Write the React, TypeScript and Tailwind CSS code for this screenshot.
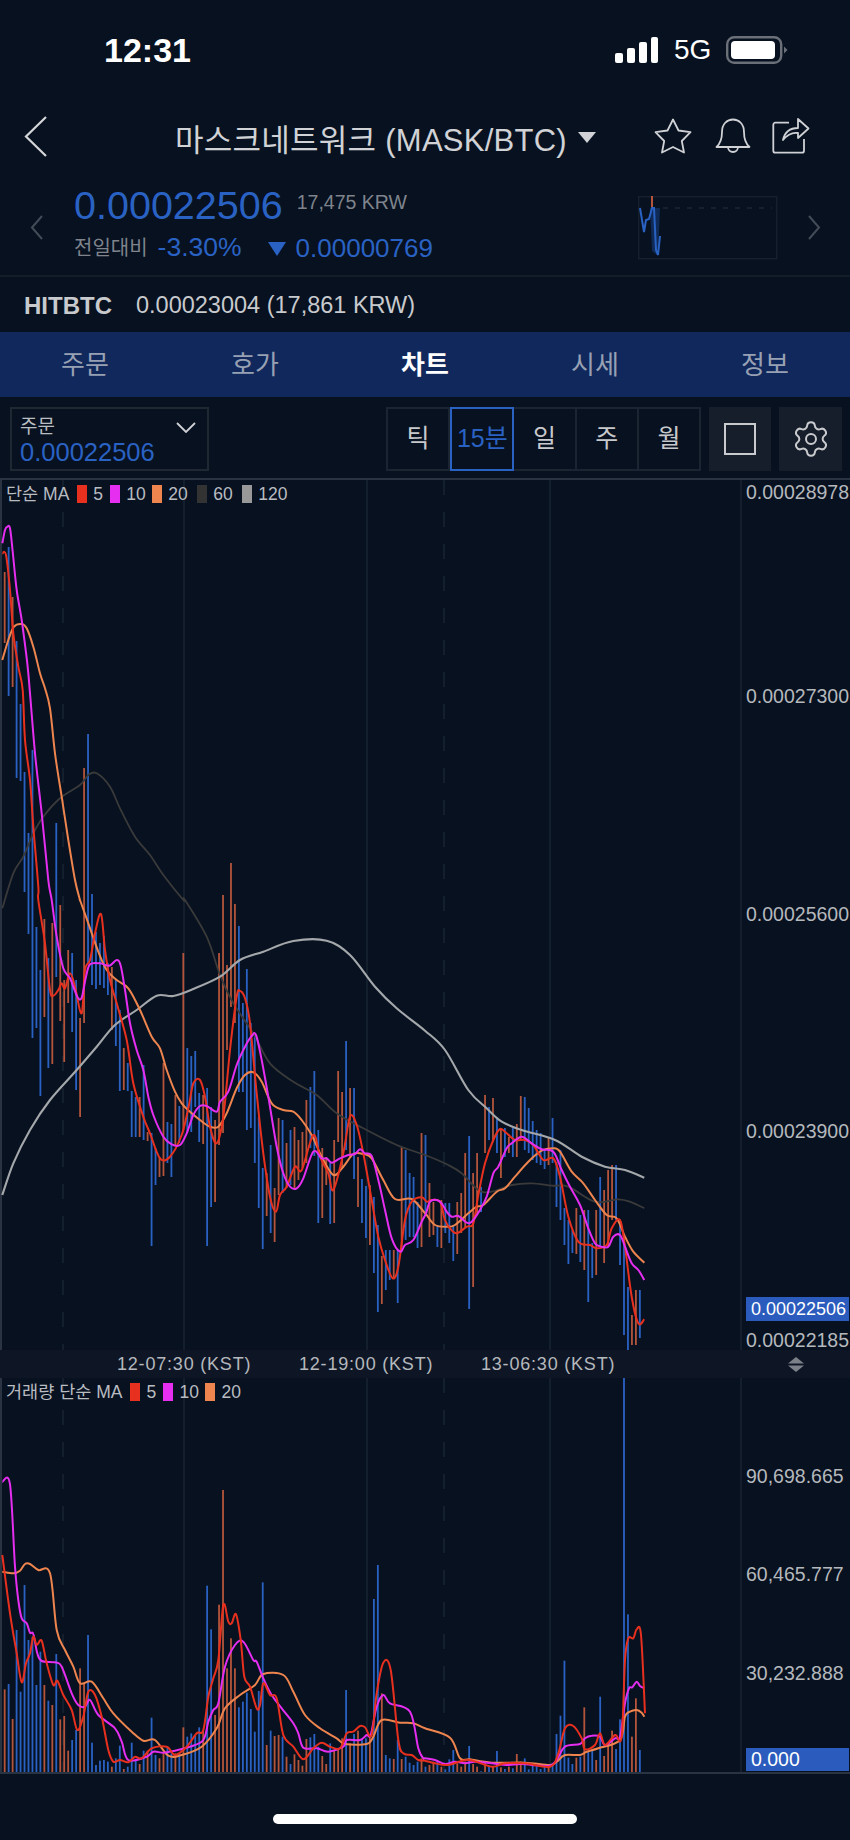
import { Settings } from 'lucide-react'

// candle rows: colour, high, low (page y)
const candles: [string, number, number][] = [
  ['o',572,643],['b',547,696],['o',597,687],['b',641,778],['b',704,781],['b',772,892],['b',833,934],['b',750,1038],['b',927,1028],['b',970,1096],
  ['o',919,1017],['b',958,1068],['o',923,1064],['b',823,977],['o',905,1021],['o',980,1062],['o',950,1003],['b',953,1032],['b',980,1090],['o',1018,1117],
  ['o',768,1023],['b',734,963],['b',894,985],['b',932,989],['b',943,985],['b',936,988],['b',963,995],['o',967,1030],['b',980,1046],['b',1010,1091],
  ['o',1048,1090],['b',1063,1091],['b',1091,1137],['b',1097,1137],['o',1097,1137],['b',1065,1140],['o',1132,1141],['b',1133,1246],['b',1148,1185],['o',1157,1177],
  ['o',1063,1176],['b',1122,1163],['b',1124,1177],['o',1095,1145],['b',1106,1143],['o',953,1130],['b',1048,1133],['b',1056,1132],['b',1051,1107],['b',1093,1142],
  ['o',1095,1144],['b',1088,1246],['b',1107,1207],['o',1120,1202],['o',953,1145],['o',895,1133],['o',965,1050],['o',863,1007],['o',904,1023],['b',926,1092],
  ['b',1003,1092],['b',969,1130],['b',1023,1128],['b',1033,1163],['b',1117,1208],['b',1168,1249],['o',1173,1216],['b',1145,1233],['o',1188,1242],['o',1118,1195],
  ['b',1120,1193],['o',1143,1188],['b',1130,1185],['o',1127,1188],['o',1140,1180],['o',1132,1168],['o',1100,1163],['b',1087,1148],['b',1071,1156],['b',1130,1223],
  ['o',1148,1218],['o',1157,1185],['b',1163,1224],['o',1140,1223],['o',1071,1142],['o',1092,1167],['b',1041,1150],['o',1088,1157],['b',1088,1179],['o',1157,1207],
  ['b',1179,1223],['b',1186,1238],['o',1185,1245],['b',1197,1273],['b',1225,1312],['o',1256,1304],['b',1250,1290],['b',1250,1280],['o',1250,1278],['b',1250,1303],
  ['o',1147,1247],['b',1150,1240],['b',1173,1237],['b',1177,1237],['b',1202,1248],['o',1133,1247],['b',1135,1213],['o',1183,1237],['o',1202,1235],['b',1225,1247],
  ['o',1200,1248],['b',1203,1233],['b',1203,1243],['b',1225,1261],['o',1202,1254],['o',1193,1233],['o',1153,1228],['b',1136,1309],['o',1173,1287],['o',1153,1215],
  ['b',1187,1212],['o',1095,1153],['b',1107,1140],['o',1098,1142],['b',1117,1153],['o',1128,1178],['b',1128,1157],['o',1137,1153],['b',1128,1157],['o',1124,1157],
  ['o',1096,1140],['b',1097,1150],['b',1108,1153],['b',1121,1160],['b',1130,1163],['b',1133,1165],['b',1150,1169],['o',1137,1165],['b',1118,1163],['b',1162,1207],
  ['b',1150,1220],['b',1208,1245],['b',1220,1264],['b',1230,1253],['o',1208,1254],['b',1215,1262],['o',1210,1270],['b',1210,1302],['b',1243,1278],['o',1210,1275],
  ['b',1177,1247],['o',1190,1263],['o',1170,1247],['o',1165,1220],['b',1165,1220],['b',1220,1265],['b',1235,1335],['b',1287,1350],['o',1315,1345],['o',1290,1345],
  ['b',1290,1338],
]

// volume tops, measured at 3x from y=1370
const volumes = [
  958,942,1047,780,965,645,810,800,945,845,945,992,1005,852,1048,1038,1142,1110,1080,895,
  940,795,1118,1185,1172,1170,1175,1190,1165,1127,1197,1190,1118,1170,1182,1142,1142,1043,1155,1165,
  1150,1130,1150,1150,1150,1072,1100,1090,1098,1072,1080,647,778,1035,704,360,895,805,895,1012,
  995,968,1017,1085,963,637,1125,1082,1098,1095,1100,1160,1182,1153,1170,1187,1107,1102,1092,1130,
  1158,1182,1120,1140,1140,1105,960,1120,1092,1082,1107,1105,1100,687,585,970,1155,1165,1167,1110,
  1167,1160,1178,1185,1175,1165,1190,1185,1175,1175,1190,1198,1168,1140,1180,1190,1175,1128,1182,1190,
  1204,1178,1188,1190,1143,1192,1197,1190,1195,1152,1175,1165,1198,1180,1190,1197,1190,1190,1180,1092,
  1037,872,1163,1182,1163,1160,1012,1145,1140,1170,980,1158,1120,1082,1137,1048,22,733,1100,985,
  1140,
]

// crops were read at 3x, so points are flat x,y lists with the crop origin
const at = (ox: number, oy: number, p: number[]) => {
  const out: number[][] = []
  for (let i = 0; i < p.length; i += 2) out.push([ox + p[i] / 3, oy + p[i + 1] / 3])
  return out
}

// catmull-rom through the points so the averages read as curves
const smooth = (pts: number[][]) => {
  let d = `M${pts[0][0].toFixed(1)} ${pts[0][1].toFixed(1)}`
  for (let i = 0; i < pts.length - 1; i++) {
    const a = pts[i - 1] ?? pts[i]
    const b = pts[i]
    const c = pts[i + 1]
    const e = pts[i + 2] ?? c
    const c1 = [b[0] + (c[0] - a[0]) / 6, b[1] + (c[1] - a[1]) / 6]
    const c2 = [c[0] - (e[0] - b[0]) / 6, c[1] - (e[1] - b[1]) / 6]
    d += `C${c1[0].toFixed(1)} ${c1[1].toFixed(1)} ${c2[0].toFixed(1)} ${c2[1].toFixed(1)} ${c[0].toFixed(1)} ${c[1].toFixed(1)}`
  }
  return d
}

const pink = smooth([
  ...at(0, 480, [7,190,15,150,22,140,30,145,38,215,50,330,65,420,82,550,90,640,105,820,125,1000,145,1200]),
  ...at(0, 900, [155,0,170,110,190,205,210,235,232,290,245,293,258,230,270,193,300,190,328,197,350,180,362,197,375,270,390,370,410,450,430,510,445,590,460,645,490,710,515,733,540,735,560,700,580,645,600,618,620,618,650,635,660,605,685,575,710,495,735,440,755,408,768,405,785,480,805,590,830,740,850,820,870,860,890,865,910,835,940,755,965,775,980,775,995,788,1020,775,1045,765,1065,762,1080,748,1095,760,1115,768,1135,840,1155,930,1175,1015,1200,1055,1215,1035,1240,1020,1265,965]),
  ...at(425, 900, [3,940,15,905,35,900,50,910,65,935,80,950,100,948,125,968,140,965,165,930,185,890,205,820,220,800,245,745,260,730,290,710,320,730,350,748,385,755,410,810,435,860,465,915,490,985,510,1030,530,1040,550,1040,565,1010,585,1005,600,1040,620,1090,640,1110,658,1140]),
])

const red = smooth([
  ...at(0, 480, [7,220,18,225,30,330,40,460,55,560,68,630,75,780,90,900,100,1040,115,1220]),
  ...at(0, 900, [115,0,135,130,150,270,160,287,175,270,185,250,195,265,210,220,225,260,245,340,255,210,270,180,285,100,303,42,315,150,330,240,350,310,380,420,400,550,430,650,450,700,480,775,510,770,545,705,565,625,580,550,600,540,615,590,630,680,650,730,670,650,690,450,710,290,720,273,735,295,750,370,770,580,790,760,810,890,828,935,840,885,860,860,885,800,905,810,940,705,960,770,985,820,1000,870,1030,760,1050,650,1070,675,1090,760,1115,900,1135,1010,1155,1080,1178,1135,1195,1100,1215,960,1235,905,1265,892]),
  ...at(425, 900, [5,905,20,900,45,905,60,960,75,985,95,1000,125,980,145,970,160,885,180,790,205,720,225,687,245,700,270,720,300,720,325,735,355,780,385,775,405,830,430,950,460,1025,495,1035,515,1045,545,1035,560,985,585,960,600,1040,620,1190,640,1270,658,1258]),
])

const orange = smooth([
  ...at(0, 480, [7,540,25,480,42,440,65,432,80,445,100,500,120,580,135,625,150,685,165,820,185,950,205,1080,225,1200,240,1260]),
  ...at(0, 900, [240,0,265,70,295,155,320,210,350,240,385,265,420,330,455,410,480,445,500,510,525,575,545,610,570,635,600,660,630,680,655,680,680,640,710,565,735,525,760,517,785,545,815,610,850,630,880,635,905,660,935,705,965,770,1000,825,1030,800,1060,762,1090,762,1115,775,1150,840,1185,897,1235,897,1275,940]),
  ...at(425, 900, [5,945,30,975,65,980,90,975,130,940,155,920,175,915,215,875,240,865,270,830,310,785,350,752,385,745,405,755,440,815,475,850,510,900,545,945,575,955,600,1010,625,1055,658,1088]),
])

const lightGray = smooth([
  ...at(0, 900, [7,885,40,790,90,690,150,600,230,510,290,440,345,375,410,330,470,287,520,288,580,267,660,230,720,180,790,155,880,123,980,122,1050,165,1125,260,1190,325,1275,392]),
  ...at(425, 900, [60,450,130,570,185,625,230,665,290,690,390,720,470,770,540,800,600,810,658,833]),
])

const darkGray = smooth([
  ...at(0, 480, [7,1285,40,1180,70,1130,100,1060,130,1010,180,955,240,915,265,885,290,880,330,920,360,985,405,1070,450,1125,490,1185,550,1260]),
  ...at(0, 900, [555,0,620,110,660,225,700,310,760,400,810,490,880,545,950,585,1010,640,1090,685,1190,735,1275,765]),
  ...at(425, 900, [70,795,110,820,160,870,200,875,260,855,320,850,380,857,430,860,510,905,580,898,620,907,658,925]),
])

const volRed = smooth([
  ...at(0, 1370, [7,555,30,730,50,850,65,937,78,880,90,850,100,800,110,825,125,812,140,880,160,945,172,932,190,975,215,1020,232,1080,250,1040,265,965,285,975,305,1040,325,1140,340,1175,360,1170,385,1177,405,1160,425,1165,455,1135,500,1130,525,1155,560,1130,590,1090,610,1080,625,980,640,925,655,870,670,705,685,755,695,760,708,733,722,810,733,920,750,950,770,1015,780,1005,790,940,810,975,830,985,850,1095,880,1130,910,1168,940,1135,965,1118,990,1130,1020,1135,1040,1090,1060,1085,1080,1068,1095,1072,1115,1095,1130,970,1150,878,1172,900,1195,1110,1210,1150,1235,1155,1255,1170,1275,1172]),
  ...at(425, 1370, [30,1180,70,1185,130,1170,200,1190,240,1180,300,1180,375,1190,400,1150,420,1075,445,1068,470,1105,480,1138,510,1125,525,1090,540,1125,570,1095,590,1100,600,870,610,805,625,805,635,778,648,795,660,1030]),
])

const volPink = smooth([
  ...at(0, 1370, [7,335,30,343,45,590,55,690,65,745,80,760,90,788,100,792,112,850,125,873,165,877,185,890,215,970,235,1005,255,1010,270,990,295,1035,345,1075,365,1115,385,1170,440,1160,460,1145,490,1148,520,1143,570,1130,610,1110,625,1055,640,1020,655,1000,675,890,705,825,730,815,760,870,770,875,790,925,815,975,845,1015,880,1060,895,1090,910,1133,950,1135,985,1145,1030,1130,1040,1110,1080,1110,1100,1095,1112,1095,1130,1010,1150,975,1170,1000,1230,1025,1255,1135,1270,1165]),
  ...at(425, 1370, [0,1165,30,1170,60,1182,90,1175,120,1180,150,1175,200,1180,250,1185,290,1182,370,1188,395,1170,420,1130,465,1122,480,1105,500,1097,525,1100,540,1125,570,1105,585,1100,600,1000,612,955,622,952,635,935,645,948,658,955]),
])

const volOrange = smooth([
  ...at(0, 1370, [7,605,40,610,60,602,75,582,90,582,115,600,150,610,170,780,195,840,220,890,240,940,275,935,310,985,340,1030,395,1085,430,1112,465,1110,505,1157,545,1155,605,1130,650,1075,675,1015,720,975,765,945,790,912,850,915,880,965,915,1035,960,1075,1010,1105,1035,1122,1100,1122,1120,1100,1145,1050,1200,1058,1240,1060,1275,1075]),
  ...at(425, 1370, [75,1103,105,1165,135,1168,200,1178,300,1178,375,1185,395,1175,420,1155,465,1155,485,1145,520,1135,585,1110,600,1040,615,1025,635,1020,650,1028,658,1040]),
])

const BLUE = '#2a62c4'
const barX = (i: number) => 4.67 + 3.97 * i - 0.9
const barFill = (c: string) => (c === 'o' ? '#b4553b' : BLUE)

function Grid({ top, bottom }: { top: number; bottom: number }) {
  return (
    <g stroke="#1a2433" strokeWidth="1.5">
      <rect x="0" y={top} width="2" height={bottom - top} fill="#2a3342" stroke="none" />
      {[184, 367, 550, 741].map((x) => <line key={x} x1={x} x2={x} y1={top} y2={bottom} />)}
      {[63, 444].map((x) => <line key={x} x1={x} x2={x} y1={top} y2={bottom} strokeDasharray="15 17" />)}
    </g>
  )
}

type MaItem = { swatch: string; n: string; width: string }

function Legend({ label, items }: { label: string; items: MaItem[] }) {
  return (
    <div className="absolute left-[6px] flex items-center text-[17.5px] leading-[18px] text-[#b9bcc0]">
      <span className="mr-[8px]">{label}</span>
      {items.map((m) => (
        <div key={m.n} className="flex items-center">
          <span className={`mr-[6px] h-[18px] w-[10px] ${m.swatch}`} />
          <span className={m.width}>{m.n}</span>
        </div>
      ))}
    </div>
  )
}

function Tick({ top, children }: { top: number; children: string }) {
  return <span className="absolute left-[746px] text-[19.5px] leading-[18px] whitespace-nowrap text-[#b5b8bc]" style={{ top }}>{children}</span>
}

const tabs = ['주문', '호가', '차트', '시세', '정보']
const periods = ['틱', '15분', '일', '주', '월']
const times = ['12-07:30 (KST)', '12-19:00 (KST)', '13-06:30 (KST)']
const ma: MaItem[] = [
  { swatch: 'bg-[#e8301f]', n: '5', width: 'w-[17px]' },
  { swatch: 'bg-[#e52ef0]', n: '10', width: 'w-[26px]' },
  { swatch: 'bg-[#ee854e]', n: '20', width: 'w-[29px]' },
]
const maLong: MaItem[] = [
  ...ma,
  { swatch: 'bg-[#333333]', n: '60', width: 'w-[29px]' },
  { swatch: 'bg-[#999999]', n: '120', width: 'w-[32px]' },
]

export default function App() {
  return (
    <div className="h-[1840px] w-[850px] overflow-hidden bg-[#071120] [font-family:'Liberation_Sans','Noto_Sans_CJK_KR',sans-serif]">
      {/* status bar */}
      <div className="flex h-[100px] items-center pl-[104px]">
        <span className="text-[34px] font-bold text-white">12:31</span>
        <svg width="44" height="26" viewBox="0 0 44 26" className="ml-[424px]" fill="#fff">
          <rect x="0" y="16" width="8" height="10" rx="2" />
          <rect x="12" y="11" width="8" height="15" rx="2" />
          <rect x="24" y="5" width="8" height="21" rx="2" />
          <rect x="36" y="0" width="7" height="26" rx="2" />
        </svg>
        <span className="ml-[15px] text-[28px] text-white">5G</span>
        <svg width="62" height="28" viewBox="0 0 62 28" className="ml-[15px]">
          <rect x="1.2" y="1.2" width="54" height="25.6" rx="7" fill="none" stroke="#6b7078" strokeWidth="2.4" />
          <rect x="5" y="5" width="44" height="18" rx="4" fill="#fff" />
          <path d="M58 10.5 L61.5 14 L58 17.5 Z" fill="#6b7078" />
        </svg>
      </div>

      {/* title row */}
      <div className="flex h-[80px] items-center pb-[8px] pl-[24px]">
        <svg width="23" height="41" viewBox="0 0 23 41" fill="none" stroke="#d5d6d8" strokeWidth="2.2">
          <polyline points="22,1 2,20.5 22,40" />
        </svg>
        <span className="mt-[10px] ml-[128px] text-[31px] leading-[40px] tracking-[0.25px] whitespace-nowrap text-[#d0d2d5]">마스크네트워크 (MASK/BTC)</span>
        <span className="mt-[2px] ml-[11px] h-0 w-0 border-x-[9px] border-t-[11px] border-x-transparent border-t-[#d0d2d5]" />
        <svg width="38" height="36" viewBox="0 0 38 36" className="ml-[58px]" fill="none" stroke="#cfd1d4" strokeWidth="1.8" strokeLinejoin="round">
          <polygon points="19,1.5 24.5,12.5 36.5,14.2 27.8,23 30,34.5 19,29 8,34.5 10.2,23 1.5,14.2 13.5,12.5" />
        </svg>
        <svg width="36" height="37" viewBox="0 0 36 37" className="ml-[23px]" fill="none" stroke="#cfd1d4" strokeWidth="1.8" strokeLinejoin="round">
          <path d="M1.5 29 C6 25 7 20 7 14 C7 6 12 1.5 18 1.5 C24 1.5 29 6 29 14 C29 20 30 25 34.5 29 Z" />
          <path d="M13 29 a5 5 0 0 0 10 0" />
        </svg>
        <svg width="40" height="38" viewBox="0 0 40 38" className="ml-[20px]" fill="none" stroke="#cfd1d4" strokeWidth="1.8" strokeLinejoin="round">
          <path d="M18 5.7 H4.3 a2 2 0 0 0 -2 2 V33.7 a2 2 0 0 0 2 2 H31 a2 2 0 0 0 2 -2 V22" />
          <path d="M12 23 C14 14 19 11 27 11 V2 L37.5 11.5 L27 21 V16 C21 15 16 18 12 23 Z" />
        </svg>
      </div>

      {/* price block */}
      <div className="flex h-[97px] items-start border-b-2 border-[#131c29] pl-[30px]">
        <svg width="13" height="25" viewBox="0 0 13 25" className="mt-[35px]" fill="none" stroke="#434b57" strokeWidth="2">
          <polyline points="12,1 2,12.5 12,24" />
        </svg>
        <div className="ml-[31px] w-[564px] pt-[5px]">
          <div className="flex h-[40px] items-center">
            <span className="text-[39.5px] leading-[40px] text-[#2a62c4]">0.00022506</span>
            <span className="mt-[-5px] ml-[14px] text-[19.5px] text-[#7f848c]">17,475 KRW</span>
          </div>
          <div className="mt-[3px] flex h-[40px] items-center">
            <span className="text-[20px] text-[#7f848c]">전일대비</span>
            <span className="ml-[10px] text-[26.5px] text-[#2a62c4]">-3.30%</span>
            <span className="mt-[2px] ml-[26px] h-0 w-0 border-x-[9.5px] border-t-[14px] border-x-transparent border-t-[#2a62c4]" />
            <span className="ml-[10px] text-[26px] text-[#2a62c4]">0.00000769</span>
          </div>
        </div>
        <svg width="140" height="64" viewBox="0 0 140 64" className="mt-[16px]" fill="none">
          <rect x="0.75" y="0.75" width="138" height="62" stroke="#161f2c" strokeWidth="1.5" />
          <line x1="25" x2="134" y1="12" y2="12" stroke="#1c2634" strokeWidth="1.5" strokeDasharray="5 7" />
          <path d="M12 12 H22 L20 60 L14 55 Z" fill="#0f2a55" />
          <line x1="14" x2="14" y1="0" y2="12" stroke="#b4553b" strokeWidth="2" />
          <polyline points="2,12 6,36 8,24 11,23 14,12 16,12 18,54 20,59 22,40" stroke={BLUE} strokeWidth="2" />
        </svg>
        <svg width="13" height="25" viewBox="0 0 13 25" className="mt-[35px] ml-[30px]" fill="none" stroke="#434b57" strokeWidth="2">
          <polyline points="1,1 11,12.5 1,24" />
        </svg>
      </div>

      {/* exchange */}
      <div className="flex h-[55px] items-center pt-[3px] pl-[24px]">
        <span className="text-[24px] font-bold text-[#c8cacd]">HITBTC</span>
        <span className="ml-[24px] text-[23.5px] text-[#c8cacd]">0.00023004 (17,861 KRW)</span>
      </div>

      {/* tabs */}
      <div className="grid h-[65px] grid-cols-5 items-center bg-[#11285c] pt-[2px] text-center text-[26px]">
        {tabs.map((t) => (
          <span key={t} className={t === '차트' ? 'font-bold text-white' : 'text-[#98a1b3]'}>{t}</span>
        ))}
      </div>

      {/* toolbar */}
      <div className="flex h-[83px] border-b-2 border-[#2a3342] pt-[10px] pl-[10px]">
        <div className="flex h-[64px] w-[199px] flex-col border-2 border-[#1f2733] pt-[6px] pl-[8px]">
          <div className="flex items-center justify-between pr-[11px]">
            <span className="text-[19px] leading-[24px] text-[#b9bcc0]">주문</span>
            <svg width="20" height="11" viewBox="0 0 20 11" fill="none" stroke="#cfd1d4" strokeWidth="1.8">
              <polyline points="1,1 10,10 19,1" />
            </svg>
          </div>
          <span className="text-[25.5px] leading-[26px] text-[#2a62c4]">0.00022506</span>
        </div>
        <div className="ml-[177px] flex h-[64px] w-[315px] border-2 border-[#1b2431] text-[25px] text-[#c7c9cc]">
          {periods.map((p) => (
            <span
              key={p}
              className={
                p === '15분'
                  ? 'relative my-[-2px] flex flex-1 items-center justify-center border-2 border-[#2a62c4] text-[#2a62c4]'
                  : 'flex flex-1 items-center justify-center border-r-2 border-[#1b2431] last:border-r-0'
              }
            >
              {p}
            </span>
          ))}
        </div>
        <div className="ml-[8px] flex h-[64px] w-[62px] items-center justify-center bg-[#171e2b]">
          <span className="h-[32px] w-[32px] border-2 border-[#c8cacd]" />
        </div>
        <div className="ml-[8px] flex h-[64px] w-[63px] items-center justify-center bg-[#171e2b]">
          <Settings size={40} strokeWidth={1.2} color="#c8cacd" />
        </div>
      </div>

      {/* price chart */}
      <div className="relative h-[870px]">
        <svg width="850" height="870" viewBox="0 480 850 870" className="block" fill="none">
          <Grid top={480} bottom={1350} />
          {candles.map(([c, hi, lo], i) => <rect key={i} x={barX(i)} y={hi} width="1.8" height={lo - hi} fill={barFill(c)} />)}
          <path d={darkGray} stroke="#3a3a3a" strokeWidth="1.8" />
          <path d={lightGray} stroke="#a5a8ab" strokeWidth="2.1" />
          <path d={orange} stroke="#ee854e" strokeWidth="2" />
          <path d={red} stroke="#e8301f" strokeWidth="2" />
          <path d={pink} stroke="#e52ef0" strokeWidth="2" />
        </svg>
        <div className="absolute top-[5px] left-0 w-full">
          <Legend label="단순 MA" items={maLong} />
        </div>
        <Tick top={3}>0.00028978</Tick>
        <Tick top={207}>0.00027300</Tick>
        <Tick top={425}>0.00025600</Tick>
        <Tick top={642}>0.00023900</Tick>
        <Tick top={851}>0.00022185</Tick>
        <span className="absolute top-[817px] left-[746px] flex h-[24px] w-[103px] items-center bg-[#2a5bbd] pl-[5px] text-[18px] text-white">0.00022506</span>
      </div>

      {/* time axis */}
      <div className="flex h-[28px] items-center bg-[#0e1626] pl-[117px] text-[18px] tracking-[0.8px] text-[#b5b8bc]">
        {times.map((t) => <span key={t} className="mr-[49px] w-[133px] whitespace-nowrap">{t}</span>)}
        <svg width="16" height="15" viewBox="0 0 16 15" className="ml-[125px] shrink-0" fill="#7c8088">
          <path d="M8 0 L16 6.5 H0 Z" />
          <path d="M8 15 L16 8.5 H0 Z" />
        </svg>
      </div>

      {/* volume chart */}
      <div className="relative h-[396px] border-b-2 border-[#2a3342]">
        <svg width="850" height="394" viewBox="0 1378 850 394" className="block" fill="none">
          <Grid top={1378} bottom={1772} />
          {volumes.map((v, i) => {
            const top = 1370 + v / 3
            return <rect key={i} x={barX(i)} y={top} width="1.8" height={1772 - top} fill={barFill(candles[i][0])} />
          })}
          <path d={volOrange} stroke="#ee854e" strokeWidth="2" />
          <path d={volPink} stroke="#e52ef0" strokeWidth="2" />
          <path d={volRed} stroke="#e8301f" strokeWidth="2" />
        </svg>
        <div className="absolute top-[5px] left-0 w-full">
          <Legend label="거래량 단순 MA" items={ma} />
        </div>
        <Tick top={89}>90,698.665</Tick>
        <Tick top={187}>60,465.777</Tick>
        <Tick top={286}>30,232.888</Tick>
        <span className="absolute top-[370px] left-[746px] flex h-[23px] w-[103px] items-center bg-[#2a5bbd] pl-[5px] text-[19.5px] text-white">0.000</span>
      </div>

      {/* home indicator */}
      <div className="flex h-[66px] justify-center pt-[40px]">
        <span className="h-[10px] w-[304px] rounded-full bg-white" />
      </div>
    </div>
  )
}
